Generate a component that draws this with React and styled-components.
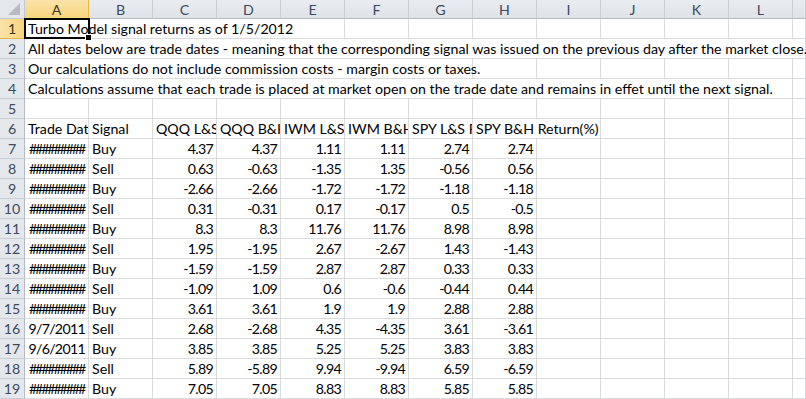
import styled, { createGlobalStyle } from "styled-components";

const GlobalStyle = createGlobalStyle`
  html, body {
    margin: 0;
    padding: 0;
    background: #fff;
    overflow: hidden;
  }
  body {
    font-family: Lato, "Liberation Sans", sans-serif;
  }
`;

// M is only a sliver at the right edge, its letter lies out of view
const COLS = ["A", "B", "C", "D", "E", "F", "G", "H", "I", "J", "K", "L", "M"];
const HASH = "#########";

// each data row: date, signal, then six returns
const trades = [
  [HASH, "Buy", "4.37", "4.37", "1.11", "1.11", "2.74", "2.74"],
  [HASH, "Sell", "0.63", "-0.63", "-1.35", "1.35", "-0.56", "0.56"],
  [HASH, "Buy", "-2.66", "-2.66", "-1.72", "-1.72", "-1.18", "-1.18"],
  [HASH, "Sell", "0.31", "-0.31", "0.17", "-0.17", "0.5", "-0.5"],
  [HASH, "Buy", "8.3", "8.3", "11.76", "11.76", "8.98", "8.98"],
  [HASH, "Sell", "1.95", "-1.95", "2.67", "-2.67", "1.43", "-1.43"],
  [HASH, "Buy", "-1.59", "-1.59", "2.87", "2.87", "0.33", "0.33"],
  [HASH, "Sell", "-1.09", "1.09", "0.6", "-0.6", "-0.44", "0.44"],
  [HASH, "Buy", "3.61", "3.61", "1.9", "1.9", "2.88", "2.88"],
  ["9/7/2011", "Sell", "2.68", "-2.68", "4.35", "-4.35", "3.61", "-3.61"],
  ["9/6/2011", "Buy", "3.85", "3.85", "5.25", "5.25", "3.83", "3.83"],
  [HASH, "Sell", "5.89", "-5.89", "9.94", "-9.94", "6.59", "-6.59"],
  [HASH, "Buy", "7.05", "7.05", "8.83", "8.83", "5.85", "5.85"],
];

// a long note that spills over the empty cells to its right
const noteRow = (text, span) => [{ text, span, spill: true }];

const rows = [
  noteRow("Turbo Model signal returns as of 1/5/2012", 5),
  noteRow(
    "All dates below are trade dates - meaning that the corresponding signal was issued on the previous day after the market close.",
    13
  ),
  noteRow("Our calculations do not include commission costs - margin costs or taxes.", 7),
  noteRow(
    "Calculations assume that each trade is placed at market open on the trade date and remains in effet until the next signal.",
    12
  ),
  [],
  [
    { text: "Trade Date" },
    { text: "Signal" },
    { text: "QQQ L&S Return(%)" },
    { text: "QQQ B&H Return(%)" },
    { text: "IWM L&S Return(%)" },
    { text: "IWM B&H Return(%)" },
    { text: "SPY L&S Return(%)" },
    { text: "SPY B&H Return(%)", span: 2 },
  ],
  ...trades.map((t) =>
    t.map((v, i) => ({
      text: v,
      align: i === 1 ? "left" : i === 0 && v === HASH ? "center" : "right",
      hash: v === HASH,
    }))
  ),
];

// pad every row out to the full 13 columns
const fillRow = (cells) => {
  const used = cells.reduce((n, c) => n + (c.span || 1), 0);
  const out = [...cells];
  for (let i = used; i < COLS.length; i++) out.push({ text: "" });
  return out;
};

const App = () => {
  return (
    <>
      <GlobalStyle />
      <Sheet>
        <Corner>
          <CornerMark />
        </Corner>
        {COLS.map((c) => (
          <ColHead key={c} $active={c === "A"}>
            {c === "M" ? "" : c}
          </ColHead>
        ))}
        {rows.map((cells, r) => (
          <Row key={r} num={r + 1} cells={fillRow(cells)} />
        ))}
        <Selection>
          <FillHandle />
        </Selection>
      </Sheet>
    </>
  );
};

const Row = ({ num, cells }) => (
  <>
    <RowHead $active={num === 1}>{num}</RowHead>
    {cells.map((c, i) => (
      <Cell
        key={i}
        $span={c.span || 1}
        $align={c.align || "left"}
        $hash={c.hash}
        $spill={c.spill}
      >
        {c.text}
      </Cell>
    ))}
  </>
);

const Sheet = styled.div`
  position: relative;
  display: grid;
  grid-template-columns: 25px repeat(12, 64px) 13px;
  grid-template-rows: 19px;
  grid-auto-rows: 20px;
  width: 806px;
  overflow: hidden;
  font-size: 14.2px;
  color: #000;
`;

const Corner = styled.div`
  box-sizing: border-box;
  display: flex;
  align-items: flex-end;
  justify-content: flex-end;
  padding: 0 4px 3px 0;
  background: #e4e7eb;
  border-right: 1px solid #c3c8cf;
  border-bottom: 1px solid #c3c8cf;
`;

const CornerMark = styled.div`
  width: 0;
  height: 0;
  border-left: 12px solid transparent;
  border-bottom: 12px solid #b8bcc2;
`;

const ColHead = styled.div`
  box-sizing: border-box;
  display: flex;
  align-items: center;
  justify-content: center;
  padding-top: 1px;
  overflow: hidden;
  color: ${(p) => (p.$active ? "#3c3526" : "#3d4b5e")};
  background: ${(p) =>
    p.$active ? "linear-gradient(#fbe3a8, #f7d57d)" : "linear-gradient(#e9ecf0, #dfe3e8)"};
  border-right: 1px solid ${(p) => (p.$active ? "#e3b650" : "#c9ced5")};
  border-bottom: 1px solid ${(p) => (p.$active ? "#e2a93b" : "#b4bbc5")};
`;

const RowHead = styled.div`
  box-sizing: border-box;
  display: flex;
  align-items: flex-end;
  justify-content: center;
  padding-bottom: 1px;
  color: ${(p) => (p.$active ? "#3c3526" : "#3d4b5e")};
  background: ${(p) => (p.$active ? "linear-gradient(90deg, #fbe3a8, #f7d57d)" : "#e4e7eb")};
  border-right: 1px solid ${(p) => (p.$active ? "#e2a93b" : "#b4bbc5")};
  border-bottom: 1px solid ${(p) => (p.$active ? "#e3b650" : "#c9ced5")};
`;

const Cell = styled.div`
  grid-column: span ${(p) => p.$span};
  position: relative;
  z-index: ${(p) => (p.$spill ? 1 : 0)};
  box-sizing: border-box;
  display: flex;
  align-items: flex-end;
  justify-content: ${(p) =>
    p.$align === "right" ? "flex-end" : p.$align === "center" ? "center" : "flex-start"};
  padding: 0 3px 1px 3px;
  letter-spacing: ${(p) =>
    p.$hash ? "-2.1px" : p.$align === "right" ? "-0.7px" : "normal"};
  white-space: nowrap;
  overflow: ${(p) => (p.$spill ? "visible" : "hidden")};
  border-right: 1px solid #d9dbdd;
  border-bottom: 1px solid #d9dbdd;
`;

const Selection = styled.div`
  position: absolute;
  z-index: 2;
  left: 24px;
  top: 18px;
  width: 66px;
  height: 21px;
  box-sizing: border-box;
  border: 2px solid #000;
  pointer-events: none;
`;

const FillHandle = styled.div`
  position: absolute;
  right: -4px;
  bottom: -4px;
  width: 5px;
  height: 5px;
  background: #000;
  border: 1px solid #fff;
`;

export default App;
